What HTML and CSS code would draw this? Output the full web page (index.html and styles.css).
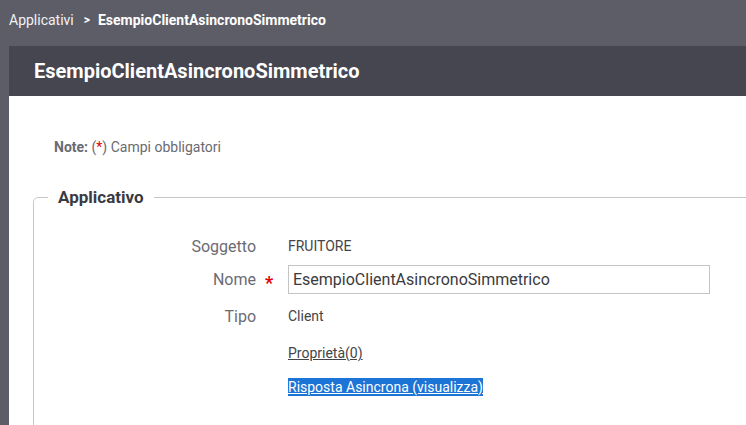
FILE: index.html
```html
<!DOCTYPE html>
<html lang="it">
<head>
<meta charset="utf-8">
<title>EsempioClientAsincronoSimmetrico</title>
<link rel="stylesheet" href="styles.css">
</head>
<body>
<div class="crumb">
  <a class="crumb-link" href="#">Applicativi</a>
  <span class="crumb-sep">&gt;</span>
  <span class="crumb-current">EsempioClientAsincronoSimmetrico</span>
</div>
<div class="main">
  <div class="titlebar"><h1 class="title">EsempioClientAsincronoSimmetrico</h1></div>
  <div class="content">
    <p class="note"><b>Note:</b> (<span class="req">*</span>) Campi obbligatori</p>
    <fieldset class="box">
      <legend class="legend">Applicativo</legend>
      <div class="rows">
        <div class="row r-sogg">
          <span class="label">Soggetto</span><span class="star"></span>
          <span class="value">FRUITORE</span>
        </div>
        <div class="row r-nome">
          <span class="label">Nome</span><span class="star">*</span>
          <span class="value"><input class="input" type="text" value="EsempioClientAsincronoSimmetrico"></span>
        </div>
        <div class="row r-tipo">
          <span class="label">Tipo</span><span class="star"></span>
          <span class="value">Client</span>
        </div>
        <div class="row r-prop">
          <span class="label"></span><span class="star"></span>
          <span class="value"><a class="link" href="#">Proprietà(0)</a></span>
        </div>
        <div class="row r-risp">
          <span class="label"></span><span class="star"></span>
          <span class="value"><a class="link sel" href="#">Risposta Asincrona (visualizza)</a></span>
        </div>
      </div>
    </fieldset>
  </div>
</div>
</body>
</html>
```
FILE: styles.css
```css
html, body {
  margin: 0;
  padding: 0;
  height: 100%;
  overflow: hidden;
}
body {
  background: #5d5d67;
  font-family: Roboto, "Liberation Sans", sans-serif;
}
.crumb {
  height: 40px;
  padding: 0 0 6px 9px;
  display: flex;
  align-items: center;
  font-size: 14px;
  color: #ffffff;
}
.crumb-link {
  color: #f2f2f4;
  text-decoration: none;
}
.crumb-sep {
  margin: 0 8px 0 10px;
  font-weight: 700;
  font-size: 12px;
}
.crumb-current {
  font-weight: 700;
}
.main {
  margin-left: 9px;
}
.titlebar {
  height: 50px;
  background: #464650;
  display: flex;
  align-items: center;
  padding-left: 25px;
}
.title {
  margin: 0;
  font-size: 20px;
  font-weight: 700;
  color: #ffffff;
}
.content {
  box-sizing: border-box;
  background: #ffffff;
  height: calc(100vh - 96px);
  padding-top: 43px;
  overflow: hidden;
}
.note {
  margin: 0 0 0 45px;
  font-size: 14px;
  line-height: 16px;
  color: #6a6a72;
}
.note b {
  color: #6a6a72;
}
.req {
  color: #e30000;
}
.box {
  margin: 33px -40px 0 24px;
  padding: 0 0 40px;
  border: 1px solid #c8c8c8;
  border-radius: 5px;
}
.legend {
  margin-left: 14px;
  padding: 0 10px;
  font-size: 17px;
  line-height: 18px;
  font-weight: 700;
  color: #3a3a42;
}
.rows {
  display: flex;
  flex-direction: column;
  padding-top: 30px;
}
.row {
  display: grid;
  grid-template-columns: 222px 32px 1fr;
  align-items: center;
}
.r-sogg { height: 20px; }
.r-nome { height: 29px; margin-top: 9px; }
.r-tipo { height: 20px; margin-top: 12px; }
.r-prop { height: 20px; margin-top: 17px; }
.r-risp { height: 20px; margin-top: 14px; }
.label {
  text-align: right;
  font-size: 16px;
  color: #6b6b73;
}
.star {
  padding-left: 9px;
  color: #e30000;
  font-size: 18px;
  font-weight: 700;
  line-height: 1;
  position: relative;
  top: 3px;
}
.value {
  font-size: 14px;
  color: #444448;
}
.input {
  box-sizing: border-box;
  width: 422px;
  height: 29px;
  border: 1px solid #c4c4c4;
  padding: 0 4px;
  font-family: Roboto, "Liberation Sans", sans-serif;
  font-size: 16px;
  color: #3a3a40;
  background: #ffffff;
  outline: none;
  display: block;
}
.link {
  color: #444448;
  text-decoration: underline;
}
.sel {
  background: #1c74d6;
  color: #ffffff;
  padding: 1px 0;
}
```
